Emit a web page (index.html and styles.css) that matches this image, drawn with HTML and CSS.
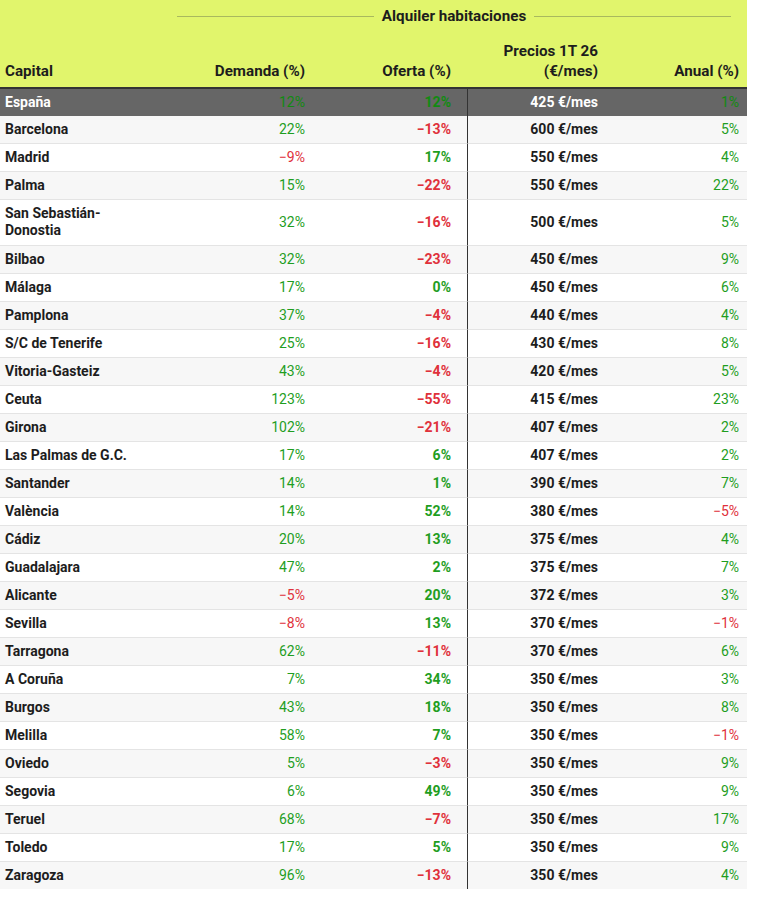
FILE: index.html
```html
<!DOCTYPE html>
<html lang="es">
<head>
<meta charset="utf-8">
<title>Alquiler habitaciones</title>
<link rel="stylesheet" href="styles.css">
</head>
<body>
<table class="tbl">
  <colgroup>
    <col class="c1"><col class="c2"><col class="c3"><col class="c4"><col class="c5">
  </colgroup>
  <thead>
    <tr class="title-row">
      <th></th>
      <th colspan="4" class="span-cell"><div class="span-title"><span class="rule"></span><span class="span-text">Alquiler habitaciones</span><span class="rule"></span></div></th>
    </tr>
    <tr class="label-row">
      <th class="l">Capital</th>
      <th class="r p8">Demanda (%)</th>
      <th class="r p16">Oferta (%)</th>
      <th class="r p8">Precios 1T 26<br>(€/mes)</th>
      <th class="r p8">Anual (%)</th>
    </tr>
  </thead>
  <tbody>
    <tr class="hl"><td class="name">España</td><td class="r p8 g">12%</td><td class="r p16 g b">12%</td><td class="r p8 price">425 €/mes</td><td class="r p8 g">1%</td></tr>
    <tr><td class="name">Barcelona</td><td class="r p8 g">22%</td><td class="r p16 n b">−13%</td><td class="r p8 price">600 €/mes</td><td class="r p8 g">5%</td></tr>
    <tr><td class="name">Madrid</td><td class="r p8 n">−9%</td><td class="r p16 g b">17%</td><td class="r p8 price">550 €/mes</td><td class="r p8 g">4%</td></tr>
    <tr><td class="name">Palma</td><td class="r p8 g">15%</td><td class="r p16 n b">−22%</td><td class="r p8 price">550 €/mes</td><td class="r p8 g">22%</td></tr>
    <tr class="wrap"><td class="name">San Sebastián-Donostia</td><td class="r p8 g">32%</td><td class="r p16 n b">−16%</td><td class="r p8 price">500 €/mes</td><td class="r p8 g">5%</td></tr>
    <tr><td class="name">Bilbao</td><td class="r p8 g">32%</td><td class="r p16 n b">−23%</td><td class="r p8 price">450 €/mes</td><td class="r p8 g">9%</td></tr>
    <tr><td class="name">Málaga</td><td class="r p8 g">17%</td><td class="r p16 g b">0%</td><td class="r p8 price">450 €/mes</td><td class="r p8 g">6%</td></tr>
    <tr><td class="name">Pamplona</td><td class="r p8 g">37%</td><td class="r p16 n b">−4%</td><td class="r p8 price">440 €/mes</td><td class="r p8 g">4%</td></tr>
    <tr><td class="name">S/C de Tenerife</td><td class="r p8 g">25%</td><td class="r p16 n b">−16%</td><td class="r p8 price">430 €/mes</td><td class="r p8 g">8%</td></tr>
    <tr><td class="name">Vitoria-Gasteiz</td><td class="r p8 g">43%</td><td class="r p16 n b">−4%</td><td class="r p8 price">420 €/mes</td><td class="r p8 g">5%</td></tr>
    <tr><td class="name">Ceuta</td><td class="r p8 g">123%</td><td class="r p16 n b">−55%</td><td class="r p8 price">415 €/mes</td><td class="r p8 g">23%</td></tr>
    <tr><td class="name">Girona</td><td class="r p8 g">102%</td><td class="r p16 n b">−21%</td><td class="r p8 price">407 €/mes</td><td class="r p8 g">2%</td></tr>
    <tr><td class="name">Las Palmas de G.C.</td><td class="r p8 g">17%</td><td class="r p16 g b">6%</td><td class="r p8 price">407 €/mes</td><td class="r p8 g">2%</td></tr>
    <tr><td class="name">Santander</td><td class="r p8 g">14%</td><td class="r p16 g b">1%</td><td class="r p8 price">390 €/mes</td><td class="r p8 g">7%</td></tr>
    <tr><td class="name">València</td><td class="r p8 g">14%</td><td class="r p16 g b">52%</td><td class="r p8 price">380 €/mes</td><td class="r p8 n">−5%</td></tr>
    <tr><td class="name">Cádiz</td><td class="r p8 g">20%</td><td class="r p16 g b">13%</td><td class="r p8 price">375 €/mes</td><td class="r p8 g">4%</td></tr>
    <tr><td class="name">Guadalajara</td><td class="r p8 g">47%</td><td class="r p16 g b">2%</td><td class="r p8 price">375 €/mes</td><td class="r p8 g">7%</td></tr>
    <tr><td class="name">Alicante</td><td class="r p8 n">−5%</td><td class="r p16 g b">20%</td><td class="r p8 price">372 €/mes</td><td class="r p8 g">3%</td></tr>
    <tr><td class="name">Sevilla</td><td class="r p8 n">−8%</td><td class="r p16 g b">13%</td><td class="r p8 price">370 €/mes</td><td class="r p8 n">−1%</td></tr>
    <tr><td class="name">Tarragona</td><td class="r p8 g">62%</td><td class="r p16 n b">−11%</td><td class="r p8 price">370 €/mes</td><td class="r p8 g">6%</td></tr>
    <tr><td class="name">A Coruña</td><td class="r p8 g">7%</td><td class="r p16 g b">34%</td><td class="r p8 price">350 €/mes</td><td class="r p8 g">3%</td></tr>
    <tr><td class="name">Burgos</td><td class="r p8 g">43%</td><td class="r p16 g b">18%</td><td class="r p8 price">350 €/mes</td><td class="r p8 g">8%</td></tr>
    <tr><td class="name">Melilla</td><td class="r p8 g">58%</td><td class="r p16 g b">7%</td><td class="r p8 price">350 €/mes</td><td class="r p8 n">−1%</td></tr>
    <tr><td class="name">Oviedo</td><td class="r p8 g">5%</td><td class="r p16 n b">−3%</td><td class="r p8 price">350 €/mes</td><td class="r p8 g">9%</td></tr>
    <tr><td class="name">Segovia</td><td class="r p8 g">6%</td><td class="r p16 g b">49%</td><td class="r p8 price">350 €/mes</td><td class="r p8 g">9%</td></tr>
    <tr><td class="name">Teruel</td><td class="r p8 g">68%</td><td class="r p16 n b">−7%</td><td class="r p8 price">350 €/mes</td><td class="r p8 g">17%</td></tr>
    <tr><td class="name">Toledo</td><td class="r p8 g">17%</td><td class="r p16 g b">5%</td><td class="r p8 price">350 €/mes</td><td class="r p8 g">9%</td></tr>
    <tr class="last"><td class="name">Zaragoza</td><td class="r p8 g">96%</td><td class="r p16 n b">−13%</td><td class="r p8 price">350 €/mes</td><td class="r p8 g">4%</td></tr>
  </tbody>
</table>
</body>
</html>
```

FILE: styles.css
```css
html, body {
  margin: 0;
  padding: 0;
  background: #ffffff;
}

body {
  font-family: Roboto, "Liberation Sans", Arial, sans-serif;
  font-size: 14px;
  color: #1d1d1d;
}

.tbl {
  width: 747px;
  table-layout: fixed;
  border-collapse: separate;
  border-spacing: 0;
}

.c1 { width: 177px; }
.c2 { width: 136px; }
.c3 { width: 154px; }
.c4 { width: 139px; }
.c5 { width: 141px; }

thead th {
  background: #e1f56c;
  font-weight: 700;
  font-size: 15.2px;
  line-height: 20px;
  padding: 0;
  vertical-align: bottom;
}

.title-row th {
  padding-top: 6px;
  height: 20px;
}

.span-cell {
  padding-right: 16px !important;
}

.span-title {
  display: flex;
  align-items: center;
  gap: 8px;
}

.rule {
  flex: 1;
  height: 1px;
  background: #a9b95e;
}

.span-text {
  white-space: nowrap;
}

.label-row th {
  padding-top: 15px;
  padding-bottom: 6px;
  border-bottom: 2px solid #333333;
}

.l { text-align: left; }
.r { text-align: right; }

.label-row th.l { padding-left: 5px; }
th.p8, td.p8 { padding-right: 8px; }
th.p16, td.p16 { padding-right: 16px; }

tbody td {
  line-height: 17px;
  padding-top: 5px;
  padding-bottom: 5px;
  border-bottom: 1px solid #e4e4e4;
  vertical-align: middle;
}

tbody tr:nth-child(even) td {
  background: #f7f7f7;
}

tbody tr:nth-child(odd) td {
  background: #ffffff;
}

tbody tr.hl td {
  background: #666666;
  color: #ffffff;
  border-bottom: 0;
}

tbody tr.wrap td {
  padding-bottom: 6px;
}

tbody tr.last td {
  border-bottom: 0;
}

td.name {
  font-weight: 700;
  padding-left: 5px;
  padding-right: 25px;
}

td.price {
  font-weight: 700;
  border-left: 1px solid #333333;
}

.g { color: #1f9e1f; }
.n { color: #e0313b; }
.b { font-weight: 700; }

tbody tr.hl td.g { color: #118a11; }
```
